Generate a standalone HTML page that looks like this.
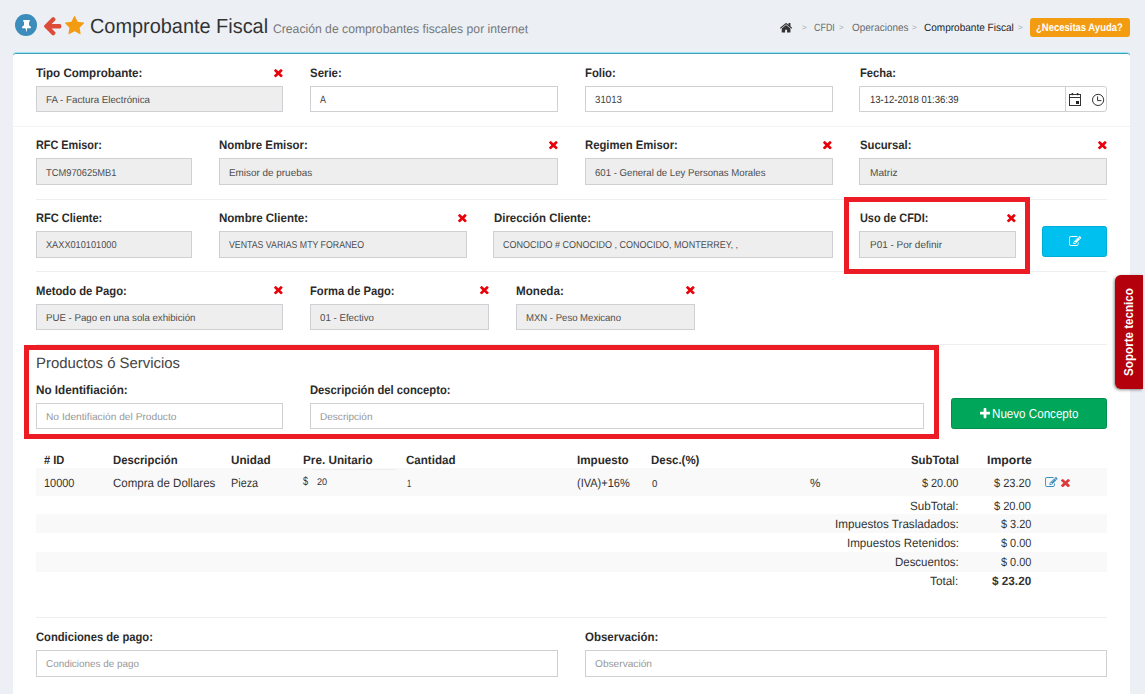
<!DOCTYPE html>
<html lang="es"><head><meta charset="utf-8"><title>Comprobante Fiscal</title>
<style>
html,body{margin:0;padding:0}
body{width:1145px;height:694px;overflow:hidden;background:#ecf0f5;font-family:"Liberation Sans",sans-serif;position:relative}
.t{position:absolute;white-space:nowrap;line-height:1;transform-origin:0 0;margin:0;padding:0;font-weight:400;display:block}
.ic{position:absolute;display:block;overflow:visible}
.pin{position:absolute;border-radius:50%;background:#3c8dbc}
.help{position:absolute;background:#f39c12;border-radius:3px}
.box{position:absolute;background:#fff;border-top:1px solid #9fe3f3;box-shadow:inset 0 1px 0 #3fa0be;border-radius:3px 3px 0 0;box-sizing:border-box}
.inp{position:absolute;box-sizing:border-box;border:1px solid #cfd0d3;background:#fff}
.inp.dis{background:#eee;border-color:#cfd0d3}
.inp.date{border-radius:0 3px 3px 0}
.vd{position:absolute;width:1px;background:#cfd0d3}
.hr{position:absolute;height:1px}
.btn{position:absolute;border-radius:2.5px;box-sizing:border-box}
.btn.info{background:#00c0ef;border:1px solid #00acd6}
.btn.ok{background:#00a65a;border:1px solid #008d4c}
.mark{position:absolute;box-sizing:border-box;border:5px solid #ec1c24}
.stripe{position:absolute;background:#f9f9f9}
.sop{position:absolute;background:#b4000c;border-radius:6px 0 0 6px;box-shadow:-1px 1px 3px rgba(0,0,0,.45)}
.sop span{position:absolute;left:50%;top:50%;white-space:nowrap;color:#fff;font-weight:700;font-size:12.5px;line-height:1;transform:translate(-50%,-50%) rotate(-90deg) scaleX(.93)}
</style></head>
<body>
<header>
<div class="pin" style="left:15.3px;top:14.1px;width:21.8px;height:21.8px"></div>
<svg class="ic" style="left:21.8px;top:20.2px;width:9.00px;height:11.80px" viewBox="0.0 -64.0 1152.0 1664.0" preserveAspectRatio="none"><path fill="#fff" d="M480 672v448q0 14-9 23t-23 9-23-9-9-23v-448q0-14 9-23t23-9 23 9 9 23zm672 352q0 26-19 45t-45 19h-429l-51 483q-2 12-10.500 20.500t-20.500 8.500h-1q-27 0-32-27l-76-485h-404q-26 0-45-19t-19-45q0-123 78.500-221.500t177.500-98.500v-512q-52 0-90-38t-38-90 38-90 90-38h640q52 0 90 38t38 90-38 90-90 38v512q99 0 177.500 98.500t78.500 221.500z"/></svg>
<svg class="ic" style="left:43.6px;top:17.0px;width:17.30px;height:18.50px" viewBox="192.0 181.0 1472.0 1558.0" preserveAspectRatio="none"><path fill="#dd4b39" d="M1664 896v128q0 53-32.500 90.500t-84.500 37.500h-704l293 294q38 36 38 90t-38 90l-75 76q-37 37-90 37-52 0-91-37l-651-652q-37-37-37-90 0-52 37-91l651-650q38-38 91-38 52 0 90 38l75 74q38 38 38 91t-38 91l-293 293h704q52 0 84.500 37.500t32.500 90.500z"/></svg>
<svg class="ic" style="left:65.4px;top:15.7px;width:19.10px;height:18.20px" viewBox="64.0 32.0 1664.0 1587.0" preserveAspectRatio="none"><path fill="#f39c12" d="M1728 647q0 22-26 48l-363 354 86 500q1 7 1 20 0 21-10.500 35.500t-30.500 14.500q-19 0-40-12l-449-236-449 236q-22 12-40 12-21 0-31.500-14.500t-10.500-35.500q0-6 2-20l86-500-364-354q-25-27-25-48 0-37 56-46l502-73 225-455q19-41 49-41t49 41l225 455 502 73q56 9 56 46z"/></svg>
<h1 class="t" style="left:90.10px;top:16.00px;font-size:20.5px;transform:rotate(0.03deg) scale(0.9709,1);color:#333">Comprobante Fiscal</h1>
<small class="t" style="left:272.90px;top:23.00px;font-size:12.5px;transform:rotate(0.03deg) scale(0.9742,1);color:#777">Creación de comprobantes fiscales por internet</small>
<nav>
<svg class="ic" style="left:779.8px;top:23.1px;width:12.20px;height:9.60px" viewBox="89.9 253.0 1612.2 1283.0" preserveAspectRatio="none"><path fill="#333" d="M1472 992v480q0 26-19 45t-45 19h-384v-384h-256v384h-384q-26 0-45-19t-19-45v-480q0-1 .5-3t.5-3l575-474 575 474q1 2 1 6zm223-69l-62 74q-8 9-21 11h-3q-13 0-21-7l-692-577-692 577q-12 8-24 7-13-2-21-11l-62-74q-8-10-7-23.500t11-21.500l719-599q32-26 76-26t76 26l244 204v-195q0-14 9-23t23-9h192q14 0 23 9t9 23v408l219 182q10 8 11 21.500t-7 23.500z"/></svg>
<span class="t" style="left:802.40px;top:23.60px;font-size:8px;transform:rotate(0.03deg) scale(1.0274,1);color:#aab0b6">&gt;</span>
<span class="t" style="left:813.80px;top:22.00px;font-size:10.5px;transform:rotate(0.03deg) scale(0.8491,1);color:#6a6a6a">CFDI</span>
<span class="t" style="left:839.40px;top:23.60px;font-size:8px;transform:rotate(0.03deg) scale(1.0274,1);color:#aab0b6">&gt;</span>
<span class="t" style="left:851.50px;top:22.00px;font-size:10.5px;transform:rotate(0.03deg) scale(0.9490,1);color:#6a6a6a">Operaciones</span>
<span class="t" style="left:912.00px;top:23.60px;font-size:8px;transform:rotate(0.03deg) scale(1.0274,1);color:#aab0b6">&gt;</span>
<span class="t" style="left:924.10px;top:22.00px;font-size:10.5px;transform:rotate(0.03deg) scale(0.9558,1);color:#222">Comprobante Fiscal</span>
<span class="t" style="left:1017.90px;top:23.60px;font-size:8px;transform:rotate(0.03deg) scale(1.0274,1);color:#aab0b6">&gt;</span>
<div class="help" style="left:1030px;top:18px;width:100px;height:19px"></div>
<span class="t" style="left:1036.40px;top:22.30px;font-size:11px;transform:rotate(0.03deg) scale(0.8623,1);color:#fff;font-weight:700">¿Necesitas Ayuda?</span>
</nav>
</header>
<main class="box" style="left:13px;top:52px;width:1117px;height:660px"></main>
<label class="t" style="left:36.20px;top:67.00px;font-size:12.3px;transform:rotate(0.03deg) scale(0.9400,1);color:#2b2b2b;font-weight:700">Tipo Comprobante:</label>
<svg class="ic" style="left:274.40000000000003px;top:68.6px;width:8.70px;height:8.30px" viewBox="302.0 366.0 1188.0 1188.0" preserveAspectRatio="none"><path fill="#e8000b" d="M1490 1322q0 40-28 68l-136 136q-28 28-68 28t-68-28l-294-294-294 294q-28 28-68 28t-68-28l-136-136q-28-28-28-68t28-68l294-294-294-294q-28-28-28-68t28-68l136-136q28-28 68-28t68 28l294 294 294-294q28-28 68-28t68 28l136 136q28 28 28 68t-28 68l-294 294 294 294q28 28 28 68z"/></svg>
<div class="inp dis" style="left:36px;top:86px;width:247px;height:26px"></div><span class="t" style="left:46.00px;top:95.00px;font-size:10px;transform:rotate(0.03deg) scale(0.9745,1);color:#4d4d4d">FA - Factura Electrónica</span>
<label class="t" style="left:310.20px;top:67.00px;font-size:12.3px;transform:rotate(0.03deg) scale(0.9303,1);color:#2b2b2b;font-weight:700">Serie:</label>
<div class="inp" style="left:310px;top:86px;width:248px;height:26px"></div><span class="t" style="left:320.00px;top:94.00px;font-size:10.5px;transform:rotate(0.03deg) scale(0.8567,1);color:#444">A</span>
<label class="t" style="left:585.20px;top:67.00px;font-size:12.3px;transform:rotate(0.03deg) scale(0.9203,1);color:#2b2b2b;font-weight:700">Folio:</label>
<div class="inp" style="left:585px;top:86px;width:248px;height:26px"></div><span class="t" style="left:594.50px;top:94.00px;font-size:10.5px;transform:rotate(0.03deg) scale(0.9246,1);color:#444">31013</span>
<label class="t" style="left:860.00px;top:67.00px;font-size:12.3px;transform:rotate(0.03deg) scale(0.9081,1);color:#2b2b2b;font-weight:700">Fecha:</label>
<div class="inp date" style="left:859px;top:86px;width:248px;height:26px"></div><span class="t" style="left:869.50px;top:94.00px;font-size:10.5px;transform:rotate(0.03deg) scale(0.9077,1);color:#333">13-12-2018 01:36:39</span>
<div class="vd" style="left:1065px;top:87px;height:24px"></div>
<svg class="ic" style="left:1068px;top:92px;width:14px;height:15px" viewBox="0 0 14 15"><rect x="1.5" y="2.5" width="11" height="11" fill="none" stroke="#333" stroke-width="1"/><line x1="1.5" y1="5.5" x2="12.5" y2="5.5" stroke="#333"/><rect x="3.6" y="1" width="1.6" height="2.2" fill="#333"/><rect x="8.8" y="1" width="1.6" height="2.2" fill="#333"/><rect x="8" y="9" width="3" height="3" fill="#222"/></svg>
<svg class="ic" style="left:1091px;top:93px;width:14px;height:14px" viewBox="0 0 14 14"><circle cx="7.1" cy="6.9" r="5.6" fill="none" stroke="#333" stroke-width="1"/><path d="M6.6 3.4V7.6H10.4" fill="none" stroke="#333" stroke-width="1"/></svg>
<div class="hr" style="left:13px;top:126px;width:1117px;background:#f3f3f3"></div>
<label class="t" style="left:36.20px;top:139.00px;font-size:12.3px;transform:rotate(0.03deg) scale(0.8834,1);color:#2b2b2b;font-weight:700">RFC Emisor:</label>
<div class="inp dis" style="left:36px;top:158px;width:156px;height:27px"></div><span class="t" style="left:46.00px;top:168.00px;font-size:10px;transform:rotate(0.03deg) scale(0.9327,1);color:#4d4d4d">TCM970625MB1</span>
<label class="t" style="left:219.40px;top:139.00px;font-size:12.3px;transform:rotate(0.03deg) scale(0.9281,1);color:#2b2b2b;font-weight:700">Nombre Emisor:</label>
<svg class="ic" style="left:548.8000000000001px;top:140.7px;width:8.70px;height:8.30px" viewBox="302.0 366.0 1188.0 1188.0" preserveAspectRatio="none"><path fill="#e8000b" d="M1490 1322q0 40-28 68l-136 136q-28 28-68 28t-68-28l-294-294-294 294q-28 28-68 28t-68-28l-136-136q-28-28-28-68t28-68l294-294-294-294q-28-28-28-68t28-68l136-136q28-28 68-28t68 28l294 294 294-294q28-28 68-28t68 28l136 136q28 28 28 68t-28 68l-294 294 294 294q28 28 28 68z"/></svg>
<div class="inp dis" style="left:219px;top:158px;width:339px;height:27px"></div><span class="t" style="left:229.10px;top:168.00px;font-size:10px;transform:rotate(0.03deg) scale(0.9901,1);color:#4d4d4d">Emisor de pruebas</span>
<label class="t" style="left:585.20px;top:139.00px;font-size:12.3px;transform:rotate(0.03deg) scale(0.9174,1);color:#2b2b2b;font-weight:700">Regimen Emisor:</label>
<svg class="ic" style="left:823.4px;top:140.7px;width:8.70px;height:8.30px" viewBox="302.0 366.0 1188.0 1188.0" preserveAspectRatio="none"><path fill="#e8000b" d="M1490 1322q0 40-28 68l-136 136q-28 28-68 28t-68-28l-294-294-294 294q-28 28-68 28t-68-28l-136-136q-28-28-28-68t28-68l294-294-294-294q-28-28-28-68t28-68l136-136q28-28 68-28t68 28l294 294 294-294q28-28 68-28t68 28l136 136q28 28 28 68t-28 68l-294 294 294 294q28 28 28 68z"/></svg>
<div class="inp dis" style="left:585px;top:158px;width:248px;height:27px"></div><span class="t" style="left:594.50px;top:168.00px;font-size:10px;transform:rotate(0.03deg) scale(0.9615,1);color:#4d4d4d">601 - General de Ley Personas Morales</span>
<label class="t" style="left:860.00px;top:139.00px;font-size:12.3px;transform:rotate(0.03deg) scale(0.9188,1);color:#2b2b2b;font-weight:700">Sucursal:</label>
<svg class="ic" style="left:1098.3px;top:140.7px;width:8.70px;height:8.30px" viewBox="302.0 366.0 1188.0 1188.0" preserveAspectRatio="none"><path fill="#e8000b" d="M1490 1322q0 40-28 68l-136 136q-28 28-68 28t-68-28l-294-294-294 294q-28 28-68 28t-68-28l-136-136q-28-28-28-68t28-68l294-294-294-294q-28-28-28-68t28-68l136-136q28-28 68-28t68 28l294 294 294-294q28-28 68-28t68 28l136 136q28 28 28 68t-28 68l-294 294 294 294q28 28 28 68z"/></svg>
<div class="inp dis" style="left:859px;top:158px;width:248px;height:27px"></div><span class="t" style="left:869.50px;top:168.00px;font-size:10px;transform:rotate(0.03deg) scale(1.0103,1);color:#4d4d4d">Matriz</span>
<div class="hr" style="left:36px;top:199px;width:1071px;background:#eeeeee"></div>
<label class="t" style="left:36.20px;top:212.00px;font-size:12.3px;transform:rotate(0.03deg) scale(0.8984,1);color:#2b2b2b;font-weight:700">RFC Cliente:</label>
<div class="inp dis" style="left:36px;top:231px;width:156px;height:27px"></div><span class="t" style="left:46.00px;top:240.00px;font-size:10px;transform:rotate(0.03deg) scale(0.9188,1);color:#4d4d4d">XAXX010101000</span>
<label class="t" style="left:219.40px;top:212.00px;font-size:12.3px;transform:rotate(0.03deg) scale(0.9380,1);color:#2b2b2b;font-weight:700">Nombre Cliente:</label>
<svg class="ic" style="left:457.5px;top:213.6px;width:8.70px;height:8.30px" viewBox="302.0 366.0 1188.0 1188.0" preserveAspectRatio="none"><path fill="#e8000b" d="M1490 1322q0 40-28 68l-136 136q-28 28-68 28t-68-28l-294-294-294 294q-28 28-68 28t-68-28l-136-136q-28-28-28-68t28-68l294-294-294-294q-28-28-28-68t28-68l136-136q28-28 68-28t68 28l294 294 294-294q28-28 68-28t68 28l136 136q28 28 28 68t-28 68l-294 294 294 294q28 28 28 68z"/></svg>
<div class="inp dis" style="left:219px;top:231px;width:248px;height:27px"></div><span class="t" style="left:229.00px;top:240.00px;font-size:10px;transform:rotate(0.03deg) scale(0.8771,1);color:#4d4d4d">VENTAS VARIAS MTY FORANEO</span>
<label class="t" style="left:493.60px;top:212.00px;font-size:12.3px;transform:rotate(0.03deg) scale(0.9276,1);color:#2b2b2b;font-weight:700">Dirección Cliente:</label>
<div class="inp dis" style="left:493px;top:231px;width:340px;height:27px"></div><span class="t" style="left:503.00px;top:240.00px;font-size:10px;transform:rotate(0.03deg) scale(0.9006,1);color:#4d4d4d">CONOCIDO # CONOCIDO , CONOCIDO, MONTERREY, ,</span>
<label class="t" style="left:859.80px;top:212.00px;font-size:12.3px;transform:rotate(0.03deg) scale(0.8858,1);color:#2b2b2b;font-weight:700">Uso de CFDI:</label>
<svg class="ic" style="left:1006.5px;top:213.5px;width:8.70px;height:8.30px" viewBox="302.0 366.0 1188.0 1188.0" preserveAspectRatio="none"><path fill="#e8000b" d="M1490 1322q0 40-28 68l-136 136q-28 28-68 28t-68-28l-294-294-294 294q-28 28-68 28t-68-28l-136-136q-28-28-28-68t28-68l294-294-294-294q-28-28-28-68t28-68l136-136q28-28 68-28t68 28l294 294 294-294q28-28 68-28t68 28l136 136q28 28 28 68t-28 68l-294 294 294 294q28 28 28 68z"/></svg>
<div class="inp dis" style="left:859px;top:231px;width:157px;height:27px"></div><span class="t" style="left:869.50px;top:240.00px;font-size:10px;transform:rotate(0.03deg) scale(0.9964,1);color:#4d4d4d">P01 - Por definir</span>
<div class="btn info" style="left:1042px;top:226px;width:65px;height:31px"></div>
<svg class="ic" style="left:1069.0px;top:236.3px;width:12.20px;height:9.90px" viewBox="0.0 128.0 1784.0 1408.0" preserveAspectRatio="none"><path fill="#fff" d="M888 1184l116-116-152-152-116 116v56h96v96h56zm440-720q-16-16-33 1l-350 350q-17 17-1 33t33-1l350-350q17-17 1-33zm80 594v190q0 119-84.500 203.500t-203.500 84.500h-832q-119 0-203.500-84.500t-84.500-203.500v-832q0-119 84.500-203.500t203.500-84.500h832q63 0 117 25 15 7 18 23 3 17-9 29l-49 49q-14 14-32 8-23-6-45-6h-832q-66 0-113 47t-47 113v832q0 66 47 113t113 47h832q66 0 113-47t47-113v-126q0-13 9-22l64-64q15-15 35-7t20 29zm-96-738l288 288-672 672h-288v-288zm444 132l-92 92-288-288 92-92q28-28 68-28t68 28l152 152q28 28 28 68t-28 68z"/></svg>
<div class="hr" style="left:36px;top:271px;width:1071px;background:#eeeeee"></div>
<label class="t" style="left:36.20px;top:285.00px;font-size:12.3px;transform:rotate(0.03deg) scale(0.9165,1);color:#2b2b2b;font-weight:700">Metodo de Pago:</label>
<svg class="ic" style="left:274.40000000000003px;top:286.4px;width:8.70px;height:8.30px" viewBox="302.0 366.0 1188.0 1188.0" preserveAspectRatio="none"><path fill="#e8000b" d="M1490 1322q0 40-28 68l-136 136q-28 28-68 28t-68-28l-294-294-294 294q-28 28-68 28t-68-28l-136-136q-28-28-28-68t28-68l294-294-294-294q-28-28-28-68t28-68l136-136q28-28 68-28t68 28l294 294 294-294q28-28 68-28t68 28l136 136q28 28 28 68t-28 68l-294 294 294 294q28 28 28 68z"/></svg>
<div class="inp dis" style="left:36px;top:304px;width:247px;height:26px"></div><span class="t" style="left:46.00px;top:313.00px;font-size:10px;transform:rotate(0.03deg) scale(0.9674,1);color:#4d4d4d">PUE - Pago en una sola exhibición</span>
<label class="t" style="left:310.40px;top:285.00px;font-size:12.3px;transform:rotate(0.03deg) scale(0.9102,1);color:#2b2b2b;font-weight:700">Forma de Pago:</label>
<svg class="ic" style="left:479.6px;top:286.4px;width:8.70px;height:8.30px" viewBox="302.0 366.0 1188.0 1188.0" preserveAspectRatio="none"><path fill="#e8000b" d="M1490 1322q0 40-28 68l-136 136q-28 28-68 28t-68-28l-294-294-294 294q-28 28-68 28t-68-28l-136-136q-28-28-28-68t28-68l294-294-294-294q-28-28-28-68t28-68l136-136q28-28 68-28t68 28l294 294 294-294q28-28 68-28t68 28l136 136q28 28 28 68t-28 68l-294 294 294 294q28 28 28 68z"/></svg>
<div class="inp dis" style="left:310px;top:304px;width:179px;height:26px"></div><span class="t" style="left:320.00px;top:313.00px;font-size:10px;transform:rotate(0.03deg) scale(0.9716,1);color:#4d4d4d">01 - Efectivo</span>
<label class="t" style="left:516.20px;top:285.00px;font-size:12.3px;transform:rotate(0.03deg) scale(0.9453,1);color:#2b2b2b;font-weight:700">Moneda:</label>
<svg class="ic" style="left:685.8000000000001px;top:286.4px;width:8.70px;height:8.30px" viewBox="302.0 366.0 1188.0 1188.0" preserveAspectRatio="none"><path fill="#e8000b" d="M1490 1322q0 40-28 68l-136 136q-28 28-68 28t-68-28l-294-294-294 294q-28 28-68 28t-68-28l-136-136q-28-28-28-68t28-68l294-294-294-294q-28-28-28-68t28-68l136-136q28-28 68-28t68 28l294 294 294-294q28-28 68-28t68 28l136 136q28 28 28 68t-28 68l-294 294 294 294q28 28 28 68z"/></svg>
<div class="inp dis" style="left:516px;top:304px;width:179px;height:26px"></div><span class="t" style="left:526.00px;top:313.00px;font-size:10px;transform:rotate(0.03deg) scale(0.9550,1);color:#4d4d4d">MXN - Peso Mexicano</span>
<div class="hr" style="left:36px;top:344px;width:1071px;background:#eeeeee"></div>
<h3 class="t" style="left:36.30px;top:355.00px;font-size:15px;transform:rotate(0.03deg) scale(0.9927,1);color:#444">Productos ó Servicios</h3>
<label class="t" style="left:36.30px;top:384.00px;font-size:12.3px;transform:rotate(0.03deg) scale(0.9518,1);color:#2b2b2b;font-weight:700">No Identifiación:</label>
<div class="inp" style="left:36px;top:403px;width:247px;height:26px"></div><span class="t" style="left:46.10px;top:412.00px;font-size:10px;transform:rotate(0.03deg) scale(1.0206,1);color:#989898">No Identifiación del Producto</span>
<label class="t" style="left:310.40px;top:384.00px;font-size:12.3px;transform:rotate(0.03deg) scale(0.9143,1);color:#2b2b2b;font-weight:700">Descripción del concepto:</label>
<div class="inp" style="left:310px;top:403px;width:614px;height:26px"></div><span class="t" style="left:320.00px;top:412.00px;font-size:10px;transform:rotate(0.03deg) scale(1.0050,1);color:#989898">Descripción</span>
<div class="btn ok" style="left:951px;top:398px;width:156px;height:31px"></div>
<svg class="ic" style="left:979.8px;top:408.2px;width:10.00px;height:10.20px" viewBox="192.0 128.0 1408.0 1408.0" preserveAspectRatio="none"><path fill="#fff" d="M1600 736v192q0 40-28 68t-68 28h-416v416q0 40-28 68t-68 28h-192q-40 0-68-28t-28-68v-416h-416q-40 0-68-28t-28-68v-192q0-40 28-68t68-28h416v-416q0-40 28-68t68-28h192q40 0 68 28t28 68v416h416q40 0 68 28t28 68z"/></svg>
<span class="t" style="left:992.30px;top:407.00px;font-size:13px;transform:rotate(0.03deg) scale(0.8933,1);color:#fff">Nuevo Concepto</span>
<div class="stripe" style="left:36px;top:468px;width:1071px;height:28px"></div>
<div class="stripe" style="left:36px;top:514px;width:1071px;height:19px"></div>
<div class="stripe" style="left:36px;top:552px;width:1071px;height:20px"></div>
<span class="t" style="left:43.50px;top:454.30px;font-size:12px;transform:rotate(0.03deg) scale(0.9269,1);color:#2b2b2b;font-weight:700"># ID</span>
<span class="t" style="left:113.30px;top:454.30px;font-size:12px;transform:rotate(0.03deg) scale(0.9405,1);color:#2b2b2b;font-weight:700">Descripción</span>
<span class="t" style="left:230.50px;top:454.30px;font-size:12px;transform:rotate(0.03deg) scale(0.9737,1);color:#2b2b2b;font-weight:700">Unidad</span>
<span class="t" style="left:302.60px;top:454.30px;font-size:12px;transform:rotate(0.03deg) scale(0.9782,1);color:#2b2b2b;font-weight:700">Pre. Unitario</span>
<span class="t" style="left:406.00px;top:454.30px;font-size:12px;transform:rotate(0.03deg) scale(0.9642,1);color:#2b2b2b;font-weight:700">Cantidad</span>
<span class="t" style="left:576.80px;top:454.30px;font-size:12px;transform:rotate(0.03deg) scale(0.9693,1);color:#2b2b2b;font-weight:700">Impuesto</span>
<span class="t" style="left:650.80px;top:454.30px;font-size:12px;transform:rotate(0.03deg) scale(0.9549,1);color:#2b2b2b;font-weight:700">Desc.(%)</span>
<span class="t" style="left:910.80px;top:454.30px;font-size:12px;transform:rotate(0.03deg) scale(0.9477,1);color:#2b2b2b;font-weight:700">SubTotal</span>
<span class="t" style="left:986.50px;top:454.30px;font-size:12px;transform:rotate(0.03deg) scale(1.0181,1);color:#2b2b2b;font-weight:700">Importe</span>
<span class="t" style="left:43.50px;top:477.10px;font-size:12px;transform:rotate(0.03deg) scale(0.9109,1);color:#333">10000</span>
<span class="t" style="left:113.30px;top:477.10px;font-size:12px;transform:rotate(0.03deg) scale(0.9586,1);color:#333">Compra de Dollares</span>
<span class="t" style="left:230.50px;top:477.10px;font-size:12px;transform:rotate(0.03deg) scale(0.9026,1);color:#333">Pieza</span>
<span class="t" style="left:302.50px;top:475.00px;font-size:12px;transform:rotate(0.03deg) scale(0.7644,1);color:#333">$</span>
<span class="t" style="left:317.00px;top:477.00px;font-size:9.5px;transform:rotate(0.03deg) scale(0.9561,1);color:#333">20</span>
<div style="position:absolute;left:312px;top:469px;width:84px;height:1px;background:#eee"></div>
<span class="t" style="left:407.40px;top:478.10px;font-size:10.5px;transform:rotate(0.03deg) scale(0.7194,1);color:#333">1</span>
<span class="t" style="left:577.20px;top:477.10px;font-size:12px;transform:rotate(0.03deg) scale(0.9170,1);color:#333">(IVA)+16%</span>
<span class="t" style="left:651.80px;top:479.10px;font-size:10px;transform:rotate(0.03deg) scale(0.9532,1);color:#333">0</span>
<span class="t" style="left:810.10px;top:477.10px;font-size:12px;transform:rotate(0.03deg) scale(0.9749,1);color:#333">%</span>
<span class="t" style="left:922.30px;top:477.10px;font-size:12px;transform:rotate(0.03deg) scale(0.9068,1);color:#333">$ 20.00</span>
<span class="t" style="left:994.40px;top:477.10px;font-size:12px;transform:rotate(0.03deg) scale(0.9218,1);color:#333">$ 23.20</span>
<svg class="ic" style="left:1045.2px;top:477.1px;width:12.60px;height:9.90px" viewBox="0.0 128.0 1784.0 1408.0" preserveAspectRatio="none"><path fill="#3c8dbc" d="M888 1184l116-116-152-152-116 116v56h96v96h56zm440-720q-16-16-33 1l-350 350q-17 17-1 33t33-1l350-350q17-17 1-33zm80 594v190q0 119-84.500 203.500t-203.500 84.500h-832q-119 0-203.500-84.500t-84.500-203.500v-832q0-119 84.500-203.500t203.500-84.500h832q63 0 117 25 15 7 18 23 3 17-9 29l-49 49q-14 14-32 8-23-6-45-6h-832q-66 0-113 47t-47 113v832q0 66 47 113t113 47h832q66 0 113-47t47-113v-126q0-13 9-22l64-64q15-15 35-7t20 29zm-96-738l288 288-672 672h-288v-288zm444 132l-92 92-288-288 92-92q28-28 68-28t68 28l152 152q28 28 28 68t-28 68z"/></svg>
<svg class="ic" style="left:1061.0px;top:478.9px;width:8.90px;height:8.10px" viewBox="302.0 366.0 1188.0 1188.0" preserveAspectRatio="none"><path fill="#dd3b3b" d="M1490 1322q0 40-28 68l-136 136q-28 28-68 28t-68-28l-294-294-294 294q-28 28-68 28t-68-28l-136-136q-28-28-28-68t28-68l294-294-294-294q-28-28-28-68t28-68l136-136q28-28 68-28t68 28l294 294 294-294q28-28 68-28t68 28l136 136q28 28 28 68t-28 68l-294 294 294 294q28 28 28 68z"/></svg>
<span class="t" style="left:910.20px;top:499.90px;font-size:12px;transform:rotate(0.03deg) scale(0.9675,1);color:#333">SubTotal:</span>
<span class="t" style="left:994.40px;top:499.90px;font-size:12px;transform:rotate(0.03deg) scale(0.9218,1);color:#333">$ 20.00</span>
<span class="t" style="left:834.80px;top:518.30px;font-size:12px;transform:rotate(0.03deg) scale(0.9717,1);color:#333">Impuestos Trasladados:</span>
<span class="t" style="left:1001.00px;top:518.30px;font-size:12px;transform:rotate(0.03deg) scale(0.9083,1);color:#333">$ 3.20</span>
<span class="t" style="left:846.50px;top:537.10px;font-size:12px;transform:rotate(0.03deg) scale(0.9658,1);color:#333">Impuestos Retenidos:</span>
<span class="t" style="left:1001.00px;top:537.10px;font-size:12px;transform:rotate(0.03deg) scale(0.9083,1);color:#333">$ 0.00</span>
<span class="t" style="left:894.90px;top:555.90px;font-size:12px;transform:rotate(0.03deg) scale(0.9549,1);color:#333">Descuentos:</span>
<span class="t" style="left:1001.00px;top:555.90px;font-size:12px;transform:rotate(0.03deg) scale(0.9083,1);color:#333">$ 0.00</span>
<span class="t" style="left:930.40px;top:574.80px;font-size:12px;transform:rotate(0.03deg) scale(0.9833,1);color:#333">Total:</span>
<span class="t" style="left:992.10px;top:574.80px;font-size:12px;transform:rotate(0.03deg) scale(0.9792,1);color:#333;font-weight:700">$ 23.20</span>
<div class="hr" style="left:36px;top:617px;width:1071px;background:#eeeeee"></div>
<label class="t" style="left:36.30px;top:631.00px;font-size:12.3px;transform:rotate(0.03deg) scale(0.9099,1);color:#2b2b2b;font-weight:700">Condiciones de pago:</label>
<div class="inp" style="left:36px;top:650px;width:522px;height:27px"></div><span class="t" style="left:46.00px;top:659.00px;font-size:10px;transform:rotate(0.03deg) scale(0.9887,1);color:#989898">Condiciones de pago</span>
<label class="t" style="left:585.20px;top:631.00px;font-size:12.3px;transform:rotate(0.03deg) scale(0.9325,1);color:#2b2b2b;font-weight:700">Observación:</label>
<div class="inp" style="left:585px;top:650px;width:522px;height:27px"></div><span class="t" style="left:594.50px;top:659.00px;font-size:10px;transform:rotate(0.03deg) scale(1.0153,1);color:#989898">Observación</span>
<div class="mark" style="left:844px;top:197px;width:186px;height:77px"></div>
<div class="mark" style="left:24px;top:345px;width:915px;height:94px"></div>
<aside class="sop" style="left:1114.6px;top:275px;width:28.4px;height:114px"><span>Soporte tecnico</span></aside>
</body></html>
